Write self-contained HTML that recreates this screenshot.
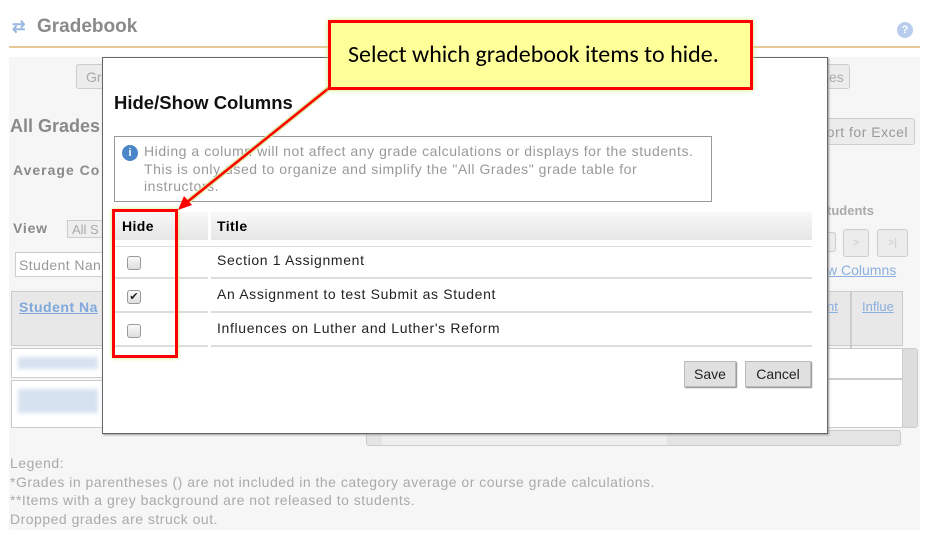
<!DOCTYPE html>
<html><head><style>
*{margin:0;padding:0;box-sizing:border-box}
body{width:930px;height:546px;background:#fff;position:relative;overflow:hidden;font-family:"Liberation Sans",sans-serif}
.a{position:absolute}
.g{color:#8a8a8a}
.btn{position:absolute;border:1px solid #ccc;border-radius:3px;background:#ececec;color:#aaa;font-size:14px;white-space:nowrap;overflow:hidden}
.leg{position:absolute;left:10px;font-size:14px;color:#aaa;letter-spacing:.5px;white-space:nowrap}
.cb{position:absolute;left:127px;width:14px;height:14px;border:1px solid #999;border-radius:3px;background:linear-gradient(#fafafa,#ddd)}
.sep{position:absolute;height:2px;background:#ddd}
.rt{position:absolute;left:217px;font-size:14px;color:#222;letter-spacing:.65px}
</style></head><body>
<div class="a" style="left:9px;top:57px;width:911px;height:473px;background:#f6f6f6"></div>
<div class="a" style="left:9px;top:46px;width:911px;height:2px;background:#e6c996"></div>
<div class="a" style="left:12px;top:17px;color:#9ab8e0;font-size:16px;font-weight:bold">⇄</div>
<div class="a g" style="left:37px;top:16px;font-size:19px;font-weight:bold">Gradebook</div>
<div class="a" style="left:897px;top:22px;width:16px;height:16px;border-radius:50%;background:#b8cdee;color:#fff;font-size:11px;text-align:center;line-height:16px;font-weight:bold">?</div>
<div class="btn" style="left:76px;top:64px;width:40px;height:25px;padding:4px 9px">Gr</div>
<div class="btn" style="left:800px;top:64px;width:50px;height:25px;padding:4px 0 0 28px">es</div>
<div class="a g" style="left:10px;top:116px;font-size:18px;font-weight:bold">All Grades</div>
<div class="btn" style="left:790px;top:118px;width:125px;height:27px;padding:5px 6px 0 0;color:#999;text-align:right;letter-spacing:.5px">ort for Excel</div>
<div class="a g" style="left:13px;top:162px;font-size:14px;font-weight:bold;letter-spacing:1px">Average Co</div>
<div class="a g" style="left:13px;top:220px;font-size:14px;font-weight:bold;letter-spacing:.8px">View</div>
<div class="a" style="left:67px;top:220px;width:50px;height:18px;border:1px solid #ccc;background:#eee;color:#aaa;font-size:13px;padding:1px 4px">All S</div>
<div class="a" style="left:15px;top:252px;width:100px;height:25px;border:1px solid #ccc;background:#fff;color:#999;font-size:14px;padding:4px 3px;letter-spacing:.4px;white-space:nowrap">Student Nan</div>
<div class="a" style="left:11px;top:291px;width:100px;height:55px;background:#e8e8e8;border:1px solid #ccc"></div>
<div class="a" style="left:19px;top:299px;color:#7fa8dc;font-size:14px;font-weight:bold;text-decoration:underline;letter-spacing:.5px">Student Na</div>
<div class="a" style="left:11px;top:348px;width:100px;height:30px;border:1px solid #ccc;background:#fff"><div style="margin:8px 6px;height:12px;width:80px;background:#d6e2f0;filter:blur(2px)"></div></div>
<div class="a" style="left:11px;top:380px;width:100px;height:48px;border:1px solid #ccc;background:#fff"><div style="margin:8px 6px;height:24px;width:80px;background:#d6e2f0;filter:blur(2px)"></div></div>
<div class="a g" style="left:827px;top:203px;font-size:13px;font-weight:bold;color:#aaa">tudents</div>
<div class="btn" style="left:820px;top:232px;width:16px;height:20px"></div>
<div class="btn" style="left:843px;top:229px;width:26px;height:28px;color:#ccc;font-size:11px;text-align:center;padding-top:7px">&gt;</div>
<div class="btn" style="left:877px;top:229px;width:31px;height:28px;color:#ccc;font-size:11px;text-align:center;padding-top:7px">&gt;|</div>
<div class="a" style="left:827px;top:262px;color:#8ab0e0;font-size:14px;text-decoration:underline">w Columns</div>
<div class="a" style="left:820px;top:291px;width:83px;height:55px;background:#e8e8e8;border:1px solid #ccc"></div>
<div class="a" style="left:850px;top:291px;width:2px;height:137px;background:#ccc"></div>
<div class="a" style="left:827px;top:299px;color:#8ab0e0;font-size:13px;text-decoration:underline">nt</div>
<div class="a" style="left:862px;top:299px;color:#8ab0e0;font-size:13px;text-decoration:underline">Influe</div>
<div class="a" style="left:820px;top:348px;width:83px;height:80px;background:#fff;border:1px solid #ccc"></div>
<div class="a" style="left:820px;top:378px;width:83px;height:2px;background:#ccc"></div>
<div class="a" style="left:902px;top:348px;width:16px;height:80px;background:#ddd;border:1px solid #ccc;border-radius:3px"></div>
<div class="a" style="left:366px;top:430px;width:535px;height:16px;background:#e4e4e4;border:1px solid #ccc;border-radius:3px"></div>
<div class="a" style="left:382px;top:431px;width:285px;height:14px;background:#eee"></div>
<div class="leg" style="top:455px">Legend:</div>
<div class="leg" style="top:474px">*Grades in parentheses () are not included in the category average or course grade calculations.</div>
<div class="leg" style="top:492px">**Items with a grey background are not released to students.</div>
<div class="leg" style="top:511px">Dropped grades are struck out.</div>

<div class="a" style="left:102px;top:57px;width:726px;height:377px;background:#fff;border:1px solid #666;box-shadow:1px 1px 2px #999"></div>
<div class="a" style="left:114px;top:92px;font-size:18.5px;font-weight:bold;color:#111">Hide/Show Columns</div>
<div class="a" style="left:114px;top:136px;width:598px;height:66px;border:1px solid #999;padding:6px 0 0 29px;font-size:14px;color:#999;line-height:17.5px;letter-spacing:.55px;white-space:nowrap">Hiding a column will not affect any grade calculations or displays for the students.<br>This is only used to organize and simplify the "All Grades" grade table for<br>instructors.</div>
<div class="a" style="left:122px;top:145px;width:16px;height:16px;border-radius:50%;background:#4a86c8;color:#fff;font-size:11px;font-weight:bold;text-align:center;line-height:16px">i</div>
<div class="a" style="left:114px;top:212px;width:94px;height:28px;background:linear-gradient(#f8f8f8,#e6e6e6);font-size:14px;font-weight:bold;padding:6px 8px;letter-spacing:.4px">Hide</div>
<div class="a" style="left:211px;top:212px;width:601px;height:28px;background:linear-gradient(#f8f8f8,#e6e6e6);font-size:14px;font-weight:bold;padding:6px 6px;letter-spacing:.4px">Title</div>
<div class="sep" style="left:114px;top:246px;width:698px;height:1px"></div>
<div class="rt" style="top:252px">Section 1 Assignment</div>
<div class="rt" style="top:286px">An Assignment to test Submit as Student</div>
<div class="rt" style="top:320px">Influences on Luther and Luther's Reform</div>
<div class="sep" style="left:114px;top:277px;width:94px"></div><div class="sep" style="left:211px;top:277px;width:601px"></div>
<div class="sep" style="left:114px;top:311px;width:94px"></div><div class="sep" style="left:211px;top:311px;width:601px"></div>
<div class="sep" style="left:114px;top:345px;width:94px"></div><div class="sep" style="left:211px;top:345px;width:601px"></div>
<div class="cb" style="top:256px"></div>
<div class="cb" style="top:290px;font-size:11px;line-height:12px;text-align:center;color:#222">✔</div>
<div class="cb" style="top:324px"></div>
<div class="a" style="left:684px;top:361px;width:52px;height:26px;background:#e0e0e0;border:1px solid #bbb;box-shadow:1px 1px 1px #888;font-size:14px;text-align:center;line-height:24px;color:#222">Save</div>
<div class="a" style="left:745px;top:361px;width:66px;height:26px;background:#e0e0e0;border:1px solid #bbb;box-shadow:1px 1px 1px #888;font-size:14px;text-align:center;line-height:24px;color:#222">Cancel</div>

<div class="a" style="left:112px;top:209px;width:66px;height:149px;border:3px solid #f00;box-shadow:0 0 4px #c8f080"></div>
<svg class="a" style="left:0;top:0" width="930" height="546">
<line x1="329" y1="88" x2="186" y2="203" stroke="#d8f0a0" stroke-width="5"/>
<line x1="329" y1="88" x2="186" y2="203" stroke="#f00" stroke-width="2.5"/>
<polygon points="178,210 184,196 192,205" fill="#f00"/>
</svg>
<div class="a" style="left:328px;top:20px;width:425px;height:70px;background:#ffff99;border:3px solid #f00;box-shadow:0 0 5px #c8f080;font-family:Carlito,'Liberation Sans',sans-serif;font-size:24px;color:#000;padding:17px 0 0 17px;white-space:nowrap">Select which gradebook items to hide.</div>
</body></html>
